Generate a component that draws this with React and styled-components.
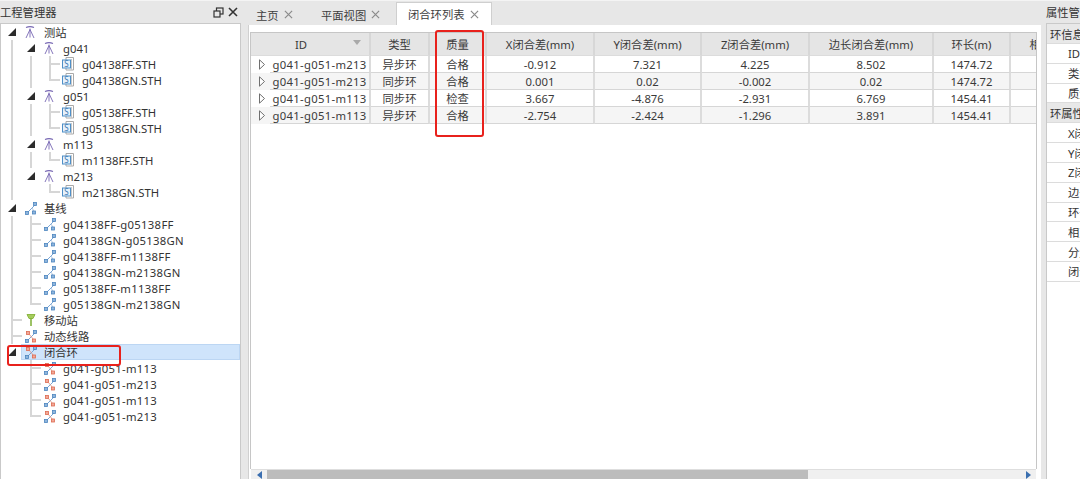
import React from 'react';
import styled, { createGlobalStyle } from 'styled-components';

const GlobalStyle = createGlobalStyle`
  html, body {
    margin: 0;
    padding: 0;
    background: #e7e7e7;
  }
`;

const FONT = '"Noto Sans", "Noto Sans CJK SC", sans-serif';

const Page = styled.div`
  position: relative;
  display: flex;
  width: 1080px;
  height: 479px;
  overflow: hidden;
  background: #e7e7e7;
  border-top: 1px solid #f4f4f4;
  box-sizing: border-box;
  font-family: ${FONT};
  font-size: 11.3px;
  color: #333;
`;

const Annotation = styled.div`
  position: absolute;
  left: ${props => props.$x}px;
  top: ${props => props.$y}px;
  width: ${props => props.$w}px;
  height: ${props => props.$h}px;
  box-sizing: border-box;
  border: 2px solid #e8211c;
  border-radius: 3px;
  pointer-events: none;
`;

/* left panel */
const LeftPanel = styled.div`
  flex: none;
  width: 241px;
  display: flex;
  flex-direction: column;
`;
const PanelTitle = styled.div`
  flex: none;
  height: 22px;
  display: flex;
  align-items: center;
  gap: 4px;
  padding-right: 3px;
  white-space: nowrap;
  color: #333;
`;
const TitleText = styled.span`
  flex: 1;
`;
const Tree = styled.div`
  flex: 1;
  background: #fff;
  border: 1px solid #c9c9c9;
  border-bottom: none;
`;
const Row = styled.div`
  position: relative;
  display: flex;
  align-items: center;
  height: 16px;
  padding-left: ${props => props.$depth * 19 + 4}px;
  white-space: nowrap;
`;
const Expander = styled.span`
  flex: none;
  width: 16px;
  height: 16px;
  margin-left: -1px;
  margin-right: 1px;
  display: flex;
  align-items: center;
  justify-content: center;
`;
const RowBody = styled.div`
  flex: 1;
  height: 16px;
  display: flex;
  align-items: center;
  gap: 6px;
  padding-left: 1px;
  box-sizing: border-box;
  background: ${props => props.$selected ? '#cfe4fb' : 'transparent'};
  box-shadow: ${props => props.$selected ? 'inset 0 0 0 1px #bcd6f3' : 'none'};
`;
const NodeLabel = styled.span`
  letter-spacing: ${props => props.$spaced ? '0.3px' : '0'};
`;
const Guide = styled.span`
  position: absolute;
  left: ${props => props.$x}px;
  top: 0;
  width: 2px;
  height: ${props => props.$half ? '9px' : '100%'};
  background: #d6d6d6;
`;
const Stub = styled.span`
  position: absolute;
  left: ${props => props.$x}px;
  top: 7px;
  width: 11px;
  height: 2px;
  background: #d6d6d6;
`;
const SubTree = styled.div`
  position: relative;
`;

const Arrow = () => (
  <svg width="10" height="10" viewBox="0 0 10 10">
    <path d="M9 1v8H1z" fill="#2c2c2c" />
  </svg>
);

const StationIcon = () => (
  <svg width="16" height="16" viewBox="0 0 16 16" fill="none" stroke="#7767b3" strokeWidth="0.9">
    <path d="M4 3.500c2.500-1 5.500-1 8 0" strokeWidth="1.300" />
    <path d="M8 4.500v9M8 5.500L4 14M8 5.500l4 8.500" />
  </svg>
);

const RoverIcon = () => (
  <svg width="16" height="16" viewBox="0 0 16 16" fill="none">
    <path d="M5 2.500h8L11 6.500H7z" fill="#a5cc5c" stroke="#86b23a" strokeWidth="0.9" />
    <path d="M9 6.500V14" stroke="#7dae33" strokeWidth="1.500" />
  </svg>
);

const FileGlyph = styled.text`
  font-family: ${FONT};
  font-size: 8px;
  fill: #3b7ab3;
`;

const FileIcon = () => (
  <svg width="16" height="16" viewBox="0 0 16 16" fill="none">
    <path d="M6 1.500h7.500v12.500H6z" fill="#fff" stroke="#a9a9a9" />
    <path d="M11.500 3v11" stroke="#c9c9c9" />
    <rect x="2.500" y="4" width="8" height="8" fill="#e6f1fb" stroke="#4f8fc7" />
    <FileGlyph x="4.200" y="10.800">S</FileGlyph>
  </svg>
);

const Node = styled.rect.attrs({ width: 3, height: 3, strokeWidth: 0.8 })`
  fill: ${props => props.$warm ? '#f2a898' : '#8fb5dc'};
  stroke: ${props => props.$warm ? '#dd6a50' : '#4d85bf'};
`;

const LinkIcon = ({ alert }) => (
  <svg width="16" height="16" viewBox="0 0 16 16" fill="none">
    <path d="M6 12L13 5" stroke="#6b9bd0" strokeWidth="0.9" />
    {alert
      ? <path d="M7 6l5 6" stroke="#e09a8a" strokeWidth="0.9" />
      : <path d="M10 8l2.500 4" stroke="#a9c3de" strokeWidth="0.9" />}
    <Node x="3.500" y="11.500" />
    <Node x="11.500" y="2.500" />
    {alert ? (
      <>
        <Node x="4.500" y="3.500" $warm />
        <Node x="10.500" y="11" $warm />
      </>
    ) : (
      <Node x="10.500" y="11" />
    )}
  </svg>
);

const ICONS = {
  station: <StationIcon />,
  rover: <RoverIcon />,
  file: <FileIcon />,
  link: <LinkIcon />,
  alert: <LinkIcon alert />,
};

const station = (label, files) => ({
  label,
  icon: 'station',
  children: files.map(name => ({ label: name, icon: 'file' })),
});
const links = (icon, names) => names.map(label => ({ label, icon, spaced: true }));

const TREE = [
  {
    label: '测站',
    icon: 'station',
    children: [
      station('g041', ['g04138FF.STH', 'g04138GN.STH']),
      station('g051', ['g05138FF.STH', 'g05138GN.STH']),
      station('m113', ['m1138FF.STH']),
      station('m213', ['m2138GN.STH']),
    ],
  },
  {
    label: '基线',
    icon: 'link',
    children: links('link', [
      'g04138FF-g05138FF',
      'g04138GN-g05138GN',
      'g04138FF-m1138FF',
      'g04138GN-m2138GN',
      'g05138FF-m1138FF',
      'g05138GN-m2138GN',
    ]),
  },
  { label: '移动站', icon: 'rover' },
  { label: '动态线路', icon: 'alert' },
  {
    label: '闭合环',
    icon: 'alert',
    selected: true,
    children: links('alert', ['g041-g051-m113', 'g041-g051-m213', 'g041-g051-m113', 'g041-g051-m213']),
  },
];

const TreeNode = ({ node, depth, last }) => {
  const guideX = depth * 19 + 10;
  const isLeaf = !node.children;
  return (
    <>
      <Row $depth={depth}>
        {isLeaf && <Guide $x={guideX} $half={last} />}
        {isLeaf && <Stub $x={guideX} />}
        <Expander>{!isLeaf && <Arrow />}</Expander>
        <RowBody $selected={node.selected}>
          {ICONS[node.icon]}
          <NodeLabel $spaced={node.spaced}>{node.label}</NodeLabel>
        </RowBody>
      </Row>
      {!isLeaf && (
        <SubTree>
          {!last && <Guide $x={guideX} />}
          {node.children.map((child, i) => (
            <TreeNode key={i} node={child} depth={depth + 1} last={i === node.children.length - 1} />
          ))}
        </SubTree>
      )}
    </>
  );
};

/* centre panel */
const Main = styled.div`
  flex: none;
  width: 796px;
  margin-left: 4px;
  display: flex;
  flex-direction: column;
`;
const TabStrip = styled.div`
  flex: none;
  height: 24px;
  display: flex;
  align-items: flex-end;
  padding-left: 2px;
`;
const Tab = styled.div`
  box-sizing: border-box;
  display: flex;
  align-items: center;
  gap: 5px;
  height: ${props => props.$active ? '23px' : '21px'};
  width: ${props => props.$width}px;
  padding-left: ${props => props.$active ? 11 : 9}px;
  background: ${props => props.$active ? '#fff' : 'transparent'};
  border: ${props => props.$active ? '1px solid #cfcfcf' : 'none'};
  border-bottom: none;
  color: #3d3d3d;
  white-space: nowrap;
`;
const Close = ({ size = 9, color = '#8a8a8a', weight = 1.3 }) => (
  <svg width={size} height={size} viewBox="0 0 10 10" fill="none" stroke={color} strokeWidth={weight}>
    <path d="M1 1l8 8M9 1L1 9" />
  </svg>
);
const TabBody = styled.div`
  flex: 1;
  min-height: 0;
  display: flex;
  flex-direction: column;
  background: #fff;
  margin-left: 3px;
  border-left: 1px solid #d0d0d0;
  padding: 7px 4px 0 1px;
`;
const TableFrame = styled.div`
  flex: 1;
  min-height: 0;
  overflow: hidden;
  border: 1px solid #c6c6c6;
  border-bottom: none;
`;
const GridTable = styled.table`
  table-layout: fixed;
  border-collapse: separate;
  border-spacing: 0;
  width: 844px;
  color: #3a3a3a;
`;
const HeadCell = styled.th`
  position: relative;
  box-sizing: border-box;
  height: 23px;
  padding: ${props => props.$sort ? '0 18px 0 0' : '0'};
  font-weight: 400;
  font-size: 11.3px;
  text-align: center;
  white-space: nowrap;
  background: #e5e5e5;
  border-right: 2px solid #d7d7d7;
  border-bottom: 1px solid #dcdcdc;
`;
const SortMark = styled.span`
  position: absolute;
  right: 8px;
  top: 7px;
  width: 0;
  height: 0;
  border-left: 4px solid transparent;
  border-right: 4px solid transparent;
  border-top: 5px solid #a9a9a9;
`;
const Cell = styled.td`
  box-sizing: border-box;
  height: 17px;
  padding: 0;
  text-align: center;
  white-space: nowrap;
  overflow: hidden;
  letter-spacing: ${props => props.$spaced ? '0.3px' : '0'};
  background: ${props => props.$odd ? '#f5f5f5' : '#fff'};
  border-right: 2px solid #dcdcdc;
  border-bottom: 1px solid #d6d6d6;
`;
const GutterCell = styled.td`
  padding: 0 0 0 7px;
  height: 17px;
  line-height: 0;
  background: ${props => props.$odd ? '#f5f5f5' : '#fff'};
`;
const HScroll = styled.div`
  flex: none;
  height: 9px;
  margin-left: 1px;
  margin-right: 1px;
  display: flex;
  align-items: stretch;
  background: #f0f0f0;
  border-top: 1px solid #dedede;
`;
const ScrollButton = styled.div`
  flex: none;
  width: 16px;
  display: flex;
  align-items: flex-end;
  justify-content: center;
`;
const ScrollThumb = styled.div`
  flex: none;
  width: 541px;
  background: #bcbcbc;
`;
const ScrollTrack = styled.div`
  flex: 1;
`;
const ScrollArrow = ({ flip }) => (
  <svg width="5" height="8" viewBox="0 0 5 8">
    <path d={flip ? 'M0 0l5 4-5 4z' : 'M5 0L0 4l5 4z'} fill="#3b6fb0" />
  </svg>
);

const COLUMNS = [
  { title: 'ID', span: 2, sort: true },
  { title: '类型', width: 59 },
  { title: '质量', width: 57 },
  { title: 'X闭合差(mm)', width: 108 },
  { title: 'Y闭合差(mm)', width: 107 },
  { title: 'Z闭合差(mm)', width: 108 },
  { title: '边长闭合差(mm)', width: 124 },
  { title: '环长(m)', width: 77 },
  { title: '相对误差', width: 84 },
];

const ROWS = [
  ['g041-g051-m213', '异步环', '合格', '-0.912', '7.321', '4.225', '8.502', '1474.72', ''],
  ['g041-g051-m213', '同步环', '合格', '0.001', '0.02', '-0.002', '0.02', '1474.72', ''],
  ['g041-g051-m113', '同步环', '检查', '3.667', '-4.876', '-2.931', '6.769', '1454.41', ''],
  ['g041-g051-m113', '异步环', '合格', '-2.754', '-2.424', '-1.296', '3.891', '1454.41', ''],
];

const RowArrow = () => (
  <svg width="8" height="11" viewBox="0 0 8 11" fill="#fff" stroke="#6f6f6f">
    <path d="M1.500 .8l5 4.700-5 4.700z" />
  </svg>
);

/* right panel */
const RightPanel = styled.div`
  flex: none;
  width: 34px;
  margin-left: 5px;
  display: flex;
  flex-direction: column;
  overflow: hidden;
  white-space: nowrap;
`;
const PropGrid = styled.div`
  flex: 1;
  width: 200px;
  background: #fff;
  border-left: 1px solid #c9c9c9;
  border-top: 1px solid #c9c9c9;
`;
const PropGroup = styled.div`
  box-sizing: border-box;
  height: 20px;
  display: flex;
  align-items: center;
  padding-left: 3px;
  background: #e8e8e8;
  border-bottom: 1px solid #dcdcdc;
`;
const PropRow = styled.div`
  box-sizing: border-box;
  height: 19.800px;
  display: flex;
  align-items: center;
  padding-left: 21px;
  border-bottom: 1px solid #dcdcdc;
`;

const RestoreIcon = () => (
  <svg width="11" height="11" viewBox="0 0 11 11" fill="none" stroke="#333" strokeWidth="1.200">
    <rect x="3.500" y="1" width="6.500" height="6" />
    <rect x="1" y="4" width="6" height="6" fill="#e7e7e7" />
  </svg>
);

const App = () => (
  <Page>
    <GlobalStyle />
    <LeftPanel>
      <PanelTitle>
        <TitleText>工程管理器</TitleText>
        <RestoreIcon />
        <Close size={10} color="#333" weight={1.6} />
      </PanelTitle>
      <Tree>
        {TREE.map((node, i) => (
          <TreeNode key={i} node={node} depth={0} last={i === TREE.length - 1} />
        ))}
      </Tree>
    </LeftPanel>

    <Main>
      <TabStrip>
        <Tab $width={65}>主页 <Close /></Tab>
        <Tab $width={84}>平面视图 <Close /></Tab>
        <Tab $width={96} $active>闭合环列表 <Close /></Tab>
      </TabStrip>
      <TabBody>
        <TableFrame>
          <GridTable>
            <colgroup>
              <col style={{ width: 19 }} />
              <col style={{ width: 101 }} />
              {COLUMNS.slice(1).map(col => <col key={col.title} style={{ width: col.width }} />)}
            </colgroup>
            <thead>
              <tr>
                {COLUMNS.map(col => (
                  <HeadCell key={col.title} colSpan={col.span} $sort={col.sort}>
                    {col.title}
                    {col.sort && <SortMark />}
                  </HeadCell>
                ))}
              </tr>
            </thead>
            <tbody>
              {ROWS.map((row, r) => (
                <tr key={r}>
                  <GutterCell $odd={r % 2 === 1}><RowArrow /></GutterCell>
                  {row.map((value, c) => <Cell key={c} $odd={r % 2 === 1} $spaced={c === 0}>{value}</Cell>)}
                </tr>
              ))}
            </tbody>
          </GridTable>
        </TableFrame>
        <HScroll>
          <ScrollButton><ScrollArrow /></ScrollButton>
          <ScrollThumb />
          <ScrollTrack />
          <ScrollButton><ScrollArrow flip /></ScrollButton>
        </HScroll>
      </TabBody>
    </Main>

    <RightPanel>
      <PanelTitle><TitleText>属性管理器</TitleText></PanelTitle>
      <PropGrid>
        <PropGroup>环信息</PropGroup>
        <PropRow>ID</PropRow>
        <PropRow>类型</PropRow>
        <PropRow>质量</PropRow>
        <PropGroup>环属性</PropGroup>
        <PropRow>X闭合差</PropRow>
        <PropRow>Y闭合差</PropRow>
        <PropRow>Z闭合差</PropRow>
        <PropRow>边长闭合差</PropRow>
        <PropRow>环长</PropRow>
        <PropRow>相对误差</PropRow>
        <PropRow>分量</PropRow>
        <PropRow>闭合差</PropRow>
      </PropGrid>
    </RightPanel>

    <Annotation $x={435} $y={29} $w={49} $h={107} />
    <Annotation $x={7} $y={344} $w={114} $h={21} />
  </Page>
);

export default App;
